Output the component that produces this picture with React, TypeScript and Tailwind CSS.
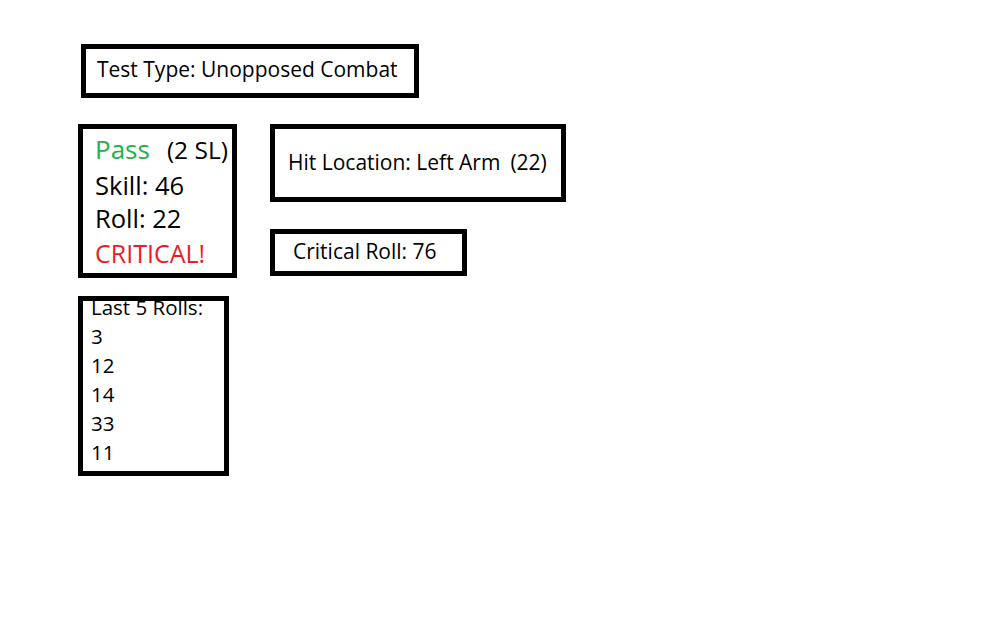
import React from "react";

const rolls = [3, 12, 14, 33, 11];

export default function App() {
  return (
    <div
      className="w-[1008px] h-[630px] bg-white text-black pt-[44px] pl-[78px]"
      style={{ fontFamily: "'Open Sans', sans-serif" }}
    >
      <div className="ml-[3px] w-[338px] h-[54px] border-[5px] border-black flex items-center pl-[11px] pb-[3px] text-[21px]">
        Test Type: Unopposed Combat
      </div>

      <div className="flex mt-[26px]">
        <div className="flex flex-col">
          <div className="w-[159px] h-[154px] border-[5px] border-black pl-[12px] pt-[4px] leading-[33px]">
            <div className="flex items-baseline">
              <span className="text-[#22b14c] text-[26px]">Pass</span>
              <span className="ml-[17px] text-[24.5px]">(2 SL)</span>
            </div>
            <div className="text-[25.5px] mt-[3px]">Skill: 46</div>
            <div className="text-[25.5px]">Roll: 22</div>
            <div className="text-[#ed1c24] text-[25px] mt-[2px]">CRITICAL!</div>
          </div>

          <div className="mt-[18px] w-[151px] h-[180px] border-[5px] border-black pl-[8px] text-[20.5px] leading-[29px]">
            <div className="-mt-[8px]">Last 5 Rolls:</div>
            {rolls.map((r, i) => (
              <div key={i}>{r}</div>
            ))}
          </div>
        </div>

        <div className="flex flex-col ml-[33px]">
          <div className="w-[296px] h-[78px] border-[5px] border-black flex items-center pl-[13px] text-[21px]">
            <span>Hit Location: Left Arm</span>
            <span className="ml-[10px]">(22)</span>
          </div>
          <div className="mt-[27px] w-[197px] h-[47px] border-[5px] border-black flex items-center pl-[18px] pb-[2px] text-[21px]">
            Critical Roll: 76
          </div>
        </div>
      </div>
    </div>
  );
}
